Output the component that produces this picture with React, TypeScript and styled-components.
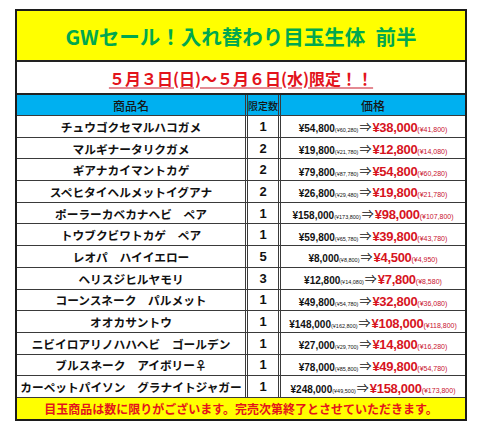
import React from 'react'
import styled, { createGlobalStyle } from 'styled-components';

type Item = {
    name : string,
    limit : number,
    price : string,
    priceTax : string,
    sale : string,
    saleTax : string
}

const items : Item[] = [
    { name: 'チュウゴクセマルハコガメ', limit: 1, price: '¥54,800', priceTax: '(¥60,280)', sale: '¥38,000', saleTax: '(¥41,800)' },
    { name: 'マルギナータリクガメ', limit: 2, price: '¥19,800', priceTax: '(¥21,780)', sale: '¥12,800', saleTax: '(¥14,080)' },
    { name: 'ギアナカイマントカゲ', limit: 2, price: '¥79,800', priceTax: '(¥87,780)', sale: '¥54,800', saleTax: '(¥60,280)' },
    { name: 'スペヒタイヘルメットイグアナ', limit: 2, price: '¥26,800', priceTax: '(¥29,480)', sale: '¥19,800', saleTax: '(¥21,780)' },
    { name: 'ポーラーカベカナヘビ　ペア', limit: 1, price: '¥158,000', priceTax: '(¥173,800)', sale: '¥98,000', saleTax: '(¥107,800)' },
    { name: 'トウブクビワトカゲ　ペア', limit: 1, price: '¥59,800', priceTax: '(¥65,780)', sale: '¥39,800', saleTax: '(¥43,780)' },
    { name: 'レオパ　ハイイエロー', limit: 5, price: '¥8,000', priceTax: '(¥8,800)', sale: '¥4,500', saleTax: '(¥4,950)' },
    { name: 'ヘリスジヒルヤモリ', limit: 3, price: '¥12,800', priceTax: '(¥14,080)', sale: '¥7,800', saleTax: '(¥8,580)' },
    { name: 'コーンスネーク　パルメット', limit: 1, price: '¥49,800', priceTax: '(¥54,780)', sale: '¥32,800', saleTax: '(¥36,080)' },
    { name: 'オオカサントウ', limit: 1, price: '¥148,000', priceTax: '(¥162,800)', sale: '¥108,000', saleTax: '(¥118,800)' },
    { name: 'ニビイロアリノハハヘビ　ゴールデン', limit: 1, price: '¥27,000', priceTax: '(¥29,700)', sale: '¥14,800', saleTax: '(¥16,280)' },
    { name: 'ブルスネーク　アイボリー♀', limit: 1, price: '¥78,000', priceTax: '(¥85,800)', sale: '¥49,800', saleTax: '(¥54,780)' },
    { name: 'カーペットパイソン　グラナイトジャガー', limit: 1, price: '¥248,000', priceTax: '(¥49,500)', sale: '¥158,000', saleTax: '(¥173,800)' },
]

const GlobalStyle = createGlobalStyle`
    body {
        margin : 0;
        background : #fff;
        font-family : "Liberation Sans", "Noto Sans CJK JP", sans-serif;
    }
`

const Page = styled.div`
    padding : 9px 0 0 15px;
`

const Sheet = styled.div`
    width : 452px;
    box-sizing : border-box;
    border : 2px solid #1c1c1c;
    background : #fff;
`

const TitleBand = styled.div`
    height : 49px;
    background : #ffff00;
    border-bottom : 2px solid #222;
    display : flex;
    align-items : center;
    justify-content : center;
    color : #00a84f;
    font-family : "Noto Sans CJK JP", sans-serif;
    font-size : 20.5px;
    font-weight : 700;
    white-space : pre;
`

const DateBand = styled.div`
    height : 31px;
    border-bottom : 2px solid #222;
    display : flex;
    align-items : center;
    justify-content : center;
`

const DateText = styled.span`
    color : #e3141c;
    font-family : "Noto Sans CJK JP", sans-serif;
    font-size : 16px;
    font-weight : 700;
    text-decoration : underline;
    text-decoration-color : #e48a92;
    text-decoration-thickness : 2px;
    text-underline-offset : 2px;
`

const Table = styled.div`
    display : grid;
    grid-template-columns : 228px 33px 1fr;
    grid-template-rows : 21px;
    grid-auto-rows : 21.7px;
`

const Cell = styled.div<{ $head? : boolean, $sep? : boolean }>`
    box-sizing : border-box;
    display : flex;
    align-items : center;
    justify-content : center;
    white-space : nowrap;
    overflow : hidden;
    background : ${p => p.$head ? '#00b0f0' : '#fff'};
    border-bottom : 1px solid #3a3a3a;
    border-left : ${p => p.$sep ? '3px double #3a3a3a' : 'none'};
`

const HeadText = styled.span<{ $size : number }>`
    font-family : "Noto Sans CJK JP", sans-serif;
    font-size : ${p => p.$size}px;
    font-weight : 500;
    color : #161616;
`

const Name = styled.span`
    font-family : "Noto Sans CJK JP", sans-serif;
    font-size : 11.7px;
    font-weight : 700;
    color : #111;
`

const Limit = styled.span`
    font-size : 13px;
    font-weight : 700;
    color : #111;
`

const Price = styled.div`
    display : flex;
    align-items : baseline;
    color : #111;
    padding-top : 1px;
`

const Regular = styled.span`
    font-size : 10px;
    font-weight : 700;
`

const Small = styled.span<{ $red? : boolean }>`
    font-size : ${p => p.$red ? 7 : 5.5}px;
    color : ${p => p.$red ? '#c8102e' : '#111'};
`

const Arrow = styled.span`
    font-family : "Noto Sans CJK JP", sans-serif;
    font-size : 12px;
    margin : 0 1px;
`

const Sale = styled.span`
    font-size : 13px;
    font-weight : 700;
    color : #d7141e;
    letter-spacing : -0.3px;
`

const FooterBand = styled.div`
    height : 21px;
    background : #ffff00;
    display : flex;
    align-items : center;
    justify-content : center;
    color : #e3141c;
    font-family : "Noto Sans CJK JP", sans-serif;
    font-size : 12px;
    font-weight : 700;
`

export default function App() {
    return (
        <Page>
            <GlobalStyle />
            <Sheet>
                <TitleBand>GWセール！入れ替わり目玉生体{'\u2002'}前半</TitleBand>
                <DateBand>
                    <DateText>５月３日(日)～５月６日(水)限定！！</DateText>
                </DateBand>
                <Table>
                    <Cell $head><HeadText $size={12}>商品名</HeadText></Cell>
                    <Cell $head $sep><HeadText $size={10}>限定数</HeadText></Cell>
                    <Cell $head $sep><HeadText $size={12}>価格</HeadText></Cell>

                    {items.map(item => (
                        <React.Fragment key={item.name}>
                            <Cell><Name>{item.name}</Name></Cell>
                            <Cell $sep><Limit>{item.limit}</Limit></Cell>
                            <Cell $sep>
                                <Price>
                                    <Regular>{item.price}</Regular>
                                    <Small>{item.priceTax}</Small>
                                    <Arrow>⇒</Arrow>
                                    <Sale>{item.sale}</Sale>
                                    <Small $red>{item.saleTax}</Small>
                                </Price>
                            </Cell>
                        </React.Fragment>
                    ))}
                </Table>
                <FooterBand>目玉商品は数に限りがございます。完売次第終了とさせていただきます。</FooterBand>
            </Sheet>
        </Page>
    )
}
